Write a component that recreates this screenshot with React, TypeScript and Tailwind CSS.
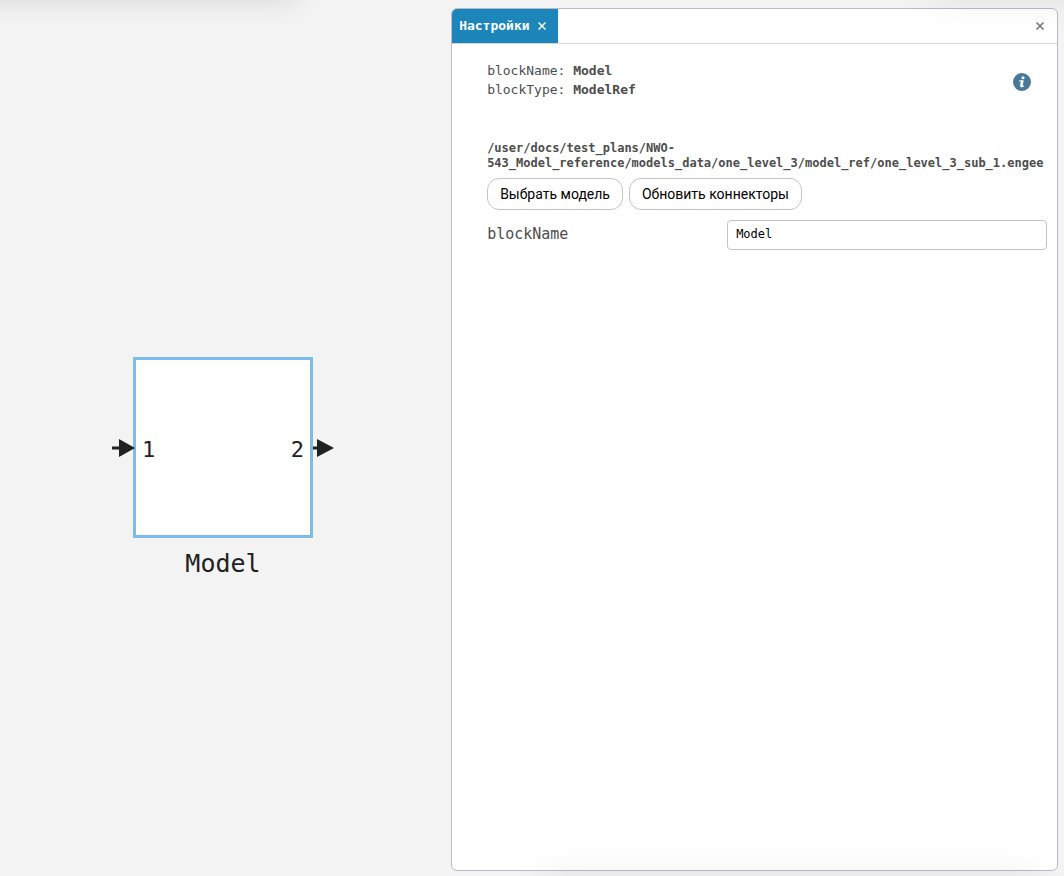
import { useState } from 'react';

const MODEL_PATH =
  '/user/docs/test_plans/NWO-543_Model_reference/models_data/one_level_3/model_ref/one_level_3_sub_1.engee';

function CloseIcon() {
  return (
    <svg width="8" height="8" viewBox="0 0 8 8" fill="none" stroke="currentColor" strokeWidth="1.5" aria-hidden="true">
      <path d="M0.5 0.5 7.5 7.5M7.5 0.5 0.5 7.5" />
    </svg>
  );
}

function InfoIcon() {
  return (
    <svg width="18" height="18" viewBox="0 0 18 18" aria-hidden="true">
      <circle cx="9" cy="9" r="9" fill="#4a7899" />
      <circle cx="10" cy="4.8" r="1.5" fill="#fff" />
      <path d="M6.4 7.2h4.3L9.8 12q-.1.8.4.7l1-.3-.2 1.2q-1.2.8-2.5.8-1.7 0-1.4-1.8l.7-3.8-1.5-.2z" fill="#fff" />
    </svg>
  );
}

function ModelBlock({ name }: { name: string }) {
  return (
    <div className="absolute left-[112px] top-[357px] flex flex-col items-center text-[#212121]">
      <div className="flex items-center">
        <svg width="21" height="18" viewBox="0 0 21 18" className="relative overflow-visible" aria-hidden="true">
          <path d="M0 7.5h7V0L23 9 7 18v-7.5H0z" fill="currentColor" />
        </svg>
        <div className="flex h-[181px] w-[180px] items-center justify-between border-[3px] border-[#7abcec] bg-white px-1.5 pt-1 text-[22px]">
          <span>1</span>
          <span>2</span>
        </div>
        <svg width="21" height="18" viewBox="0 0 21 18" aria-hidden="true">
          <path d="M0 7.5h4V0l17 9-17 9v-7.5H0z" fill="currentColor" />
        </svg>
      </div>
      <div className="mt-2 text-[25px] leading-9">{name}</div>
    </div>
  );
}

interface SettingsPanelProps {
  name: string;
  onNameChange: (value: string) => void;
}

function SettingsPanel({ name, onNameChange }: SettingsPanelProps) {
  return (
    <section className="mt-2 mr-1.5 mb-[5px] flex min-w-0 flex-1 flex-col overflow-hidden rounded-md border border-[#b9b9ca] bg-white text-[#4d4d4d]">
      <header className="flex h-[35px] items-stretch justify-between border-b border-[#d5d6d9]">
        <div className="flex items-center gap-2 bg-[#1c86bb] pr-3 pl-[7px] text-[13px] font-bold text-white">
          Настройки
          <button type="button" aria-label="Закрыть вкладку">
            <CloseIcon />
          </button>
        </div>
        <button type="button" aria-label="Закрыть панель" className="px-[13px] text-[#6e7578]">
          <CloseIcon />
        </button>
      </header>

      <div className="flex flex-col pt-[17px] pr-2.5 pl-[35px]">
        <div className="flex items-center justify-between pr-4">
          <div className="text-[13px] leading-[19px]">
            <div>
              blockName: <b>{name}</b>
            </div>
            <div>
              blockType: <b>ModelRef</b>
            </div>
          </div>
          <button type="button" aria-label="Справка" className="mt-1">
            <InfoIcon />
          </button>
        </div>

        <div className="mt-[42px] text-[12px] leading-[15px] font-bold">{MODEL_PATH}</div>

        <div className="mt-[7px] flex gap-1.5 font-['Roboto',sans-serif] text-[14px] text-black">
          <button type="button" className="h-8 rounded-xl border border-[#c4c4c4] px-3">
            Выбрать модель
          </button>
          <button type="button" className="h-8 rounded-xl border border-[#c4c4c4] px-3">
            Обновить коннекторы
          </button>
        </div>

        <div className="mt-2.5 flex items-center">
          <label htmlFor="block-name" className="w-60 pb-0.5 text-[15px]">
            blockName
          </label>
          <input
            id="block-name"
            type="text"
            value={name}
            onChange={(e) => onNameChange(e.target.value)}
            className="h-[30px] min-w-0 flex-1 rounded-[4px] border border-[#c4c4c4] px-2 pb-0.5 text-[12px] text-black"
          />
        </div>
      </div>
    </section>
  );
}

export default function App() {
  const [name, setName] = useState('Model');

  return (
    <div className="relative flex min-h-screen overflow-hidden bg-[#f3f3f3] font-['DejaVu_Sans_Mono',monospace]">
      <main className="relative w-[42.4%]">
        <ModelBlock name={name} />
      </main>
      <SettingsPanel name={name} onNameChange={setName} />

      {/* тени плавающих панелей за краями холста */}
      <div className="pointer-events-none absolute -top-10 -left-10 h-10 w-[336px] shadow-[0_0_28px_rgba(0,0,0,0.12)]" />
      <div className="pointer-events-none absolute -top-10 -right-10 h-10 w-[176px] shadow-[0_0_36px_rgba(0,0,0,0.07)]" />
      <div className="pointer-events-none absolute right-6 -bottom-10 left-[540px] h-10 shadow-[0_0_36px_rgba(0,0,0,0.07)]" />
    </div>
  );
}
